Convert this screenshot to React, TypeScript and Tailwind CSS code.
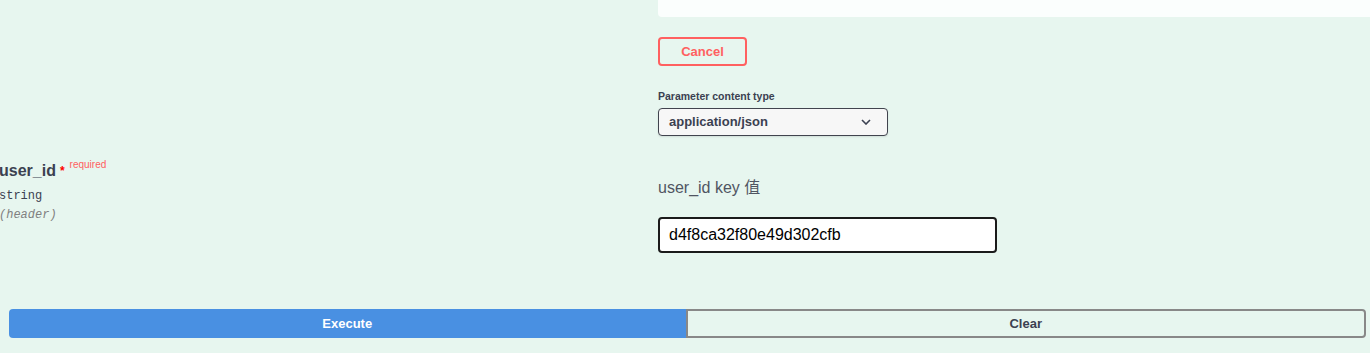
const sans = { fontFamily: '"Liberation Sans", "Noto Sans CJK SC", sans-serif' }

const App = () => {
    return (
        <div className="w-[1370px] h-[353px] overflow-hidden bg-[#e7f6ef] text-[#3b4151] font-['Liberation_Sans','Noto_Sans_CJK_SC',sans-serif]">
            <div className="flex">
                <div className="w-[658px] shrink-0"></div>
                <div className="flex-1 flex flex-col items-start">
                    <div className="w-full h-[17px] bg-[#fbfefd] rounded-bl-[4px]"></div>
                    <button className="mt-[20px] w-[89px] h-[29px] border-2 border-[#ff6060] rounded-[4px] text-[#ff6060] text-[13px] font-bold">
                        Cancel
                    </button>
                    <div className="mt-[23px] text-[10.5px] font-bold leading-[14px]">Parameter content type</div>
                    <div className="mt-[5px] w-[230px] h-[28px] border border-[#41444e] rounded-[4px] bg-[#f7f7f7] flex items-center justify-between pl-[10px] pr-[16px] shadow-[0_1px_2px_rgba(0,0,0,0.1)]">
                        <span className="text-[13px] font-bold">application/json</span>
                        <svg width="10" height="6" viewBox="0 0 10 6" fill="none" stroke="#3b4151" strokeWidth="1.6">
                            <path d="M1 1l4 4 4-4" />
                        </svg>
                    </div>
                </div>
            </div>

            <div className="flex mt-[25px]">
                <div className="w-[658px] shrink-0">
                    <div className="flex items-start -ml-[1px]">
                        <span className="text-[16px] font-bold leading-[20px]">user_id</span>
                        <span className="ml-[4px] text-[#ff0000] text-[12px] font-bold leading-[20px]">*</span>
                        <span className="ml-[5px] text-[#ff6060] text-[10px] leading-[12px] -mt-[2px]">required</span>
                    </div>
                    <div className="-ml-[1px] mt-[6px] font-['Liberation_Mono',monospace] text-[12px] leading-[18px]">string</div>
                    <div className="-ml-[1px] mt-[1px] font-['Liberation_Mono',monospace] text-[12px] leading-[18px] italic text-[#808080]">(header)</div>
                </div>
                <div className="flex-1 flex flex-col items-start">
                    <div className="mt-[16px] text-[16px] leading-[22px] text-[#505562]" style={sans}>user_id key 值</div>
                    <input
                        className="mt-[18px] w-[339px] h-[36px] border-2 border-[#1b1b1b] rounded-[4px] bg-white pl-[9px] text-[16px] text-black outline-none"
                        defaultValue="d4f8ca32f80e49d302cfb"
                    />
                </div>
            </div>

            <div className="flex pl-[9px] pr-[4px] mt-[56px]">
                <button className="flex-1 h-[29px] bg-[#4990e2] rounded-l-[4px] text-white text-[13px] font-bold">
                    Execute
                </button>
                <button className="flex-1 h-[29px] border-2 border-[#888888] rounded-r-[4px] text-[13px] font-bold">
                    Clear
                </button>
            </div>
        </div>
    )
}

export default App
